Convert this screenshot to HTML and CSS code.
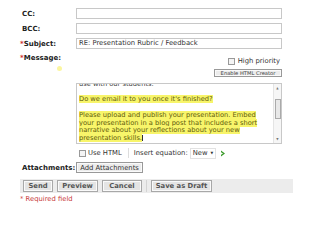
FILE: index.html
```html
<!DOCTYPE html>
<html>
<head>
<meta charset="utf-8">
<link rel="stylesheet" href="styles.css">
</head>
<body>
<div class="form">
  <div class="row first">
    <div class="label">CC:</div>
    <div class="input"></div>
  </div>
  <div class="row">
    <div class="label">BCC:</div>
    <div class="input"></div>
  </div>
  <div class="row">
    <div class="label"><span class="req">*</span>Subject:</div>
    <div class="input">RE: Presentation Rubric / Feedback</div>
  </div>
  <div class="row msg">
    <div class="label"><span class="req">*</span>Message:<span class="cursor"></span></div>
    <div class="content">
      <div class="priority"><span class="cb"></span>High priority</div>
      <div class="enable"><span class="btn small">Enable HTML Creator</span></div>
      <div class="textarea">
        <div class="text">
          <div class="inner">
            <p>use with our students.</p>
            <p>&nbsp;</p>
            <p><span class="hl">Do we email it to you once it's finished?</span></p>
            <p>&nbsp;</p>
            <p><span class="hl">Please upload and publish your presentation. Embed</span></p>
            <p><span class="hl">your presentation in a blog post that includes a short</span></p>
            <p><span class="hl">narrative about your reflections about your new</span></p>
            <p><span class="hl">presentation skills.</span><span class="caret"></span></p>
          </div>
        </div>
        <div class="scroll">
          <span class="arr">&#9650;</span>
          <span class="thumb"></span>
          <span class="arr">&#9660;</span>
        </div>
      </div>
      <div class="tools">
        <span class="cb"></span><span class="usehtml">Use HTML</span>
        <span class="sep"></span>
        <span>Insert equation:</span>
        <span class="select">New <span class="dd">&#9660;</span></span>
        <svg class="go" width="6" height="7" viewBox="0 0 6 7"><path d="M1 0.5 L5 3.5 L1 6.5 L1 4.8 L3 3.5 L1 2.2 Z" fill="#3a9a2a"/></svg>
      </div>
    </div>
  </div>
  <div class="row attach">
    <div class="label">Attachments:</div>
    <span class="btn">Add Attachments</span>
  </div>
  <div class="bar">
    <span class="btn big">Send</span>
    <span class="btn big">Preview</span>
    <span class="btn big">Cancel</span>
    <span class="vsep"></span>
    <span class="btn big">Save as Draft</span>
  </div>
  <div class="required">* Required field</div>
</div>
</body>
</html>
```
FILE: styles.css
```css
html, body {
  margin: 0;
  padding: 0;
  background: #fff;
}
body {
  width: 320px;
  height: 240px;
  overflow: hidden;
  font-family: "DejaVu Sans", Verdana, sans-serif;
  font-size: 7px;
  color: #333;
}
.form {
  padding-left: 20px;
  width: 262px;
}
.row {
  display: flex;
  align-items: center;
  margin-top: 4px;
}
.row.first {
  margin-top: 8px;
}
.label {
  width: 56px;
  flex: none;
  font-weight: bold;
  color: #222;
  padding-left: 2px;
  box-sizing: border-box;
  position: relative;
}
.req {
  color: #d03030;
  margin-left: -2px;
}
.input {
  flex: 1;
  height: 11px;
  border: 1px solid #c8c8c8;
  box-sizing: border-box;
  font-size: 6.8px;
  line-height: 9px;
  padding-left: 2px;
  color: #333;
}
.row.msg {
  align-items: flex-start;
  margin-top: 5px;
}
.row.msg .label {
  line-height: 9px;
}
.cursor {
  position: absolute;
  left: 37px;
  top: 12px;
  width: 5px;
  height: 5px;
  border-radius: 50%;
  background: #fbf6a0;
}
.content {
  flex: 1;
  padding-top: 3px;
}
.priority {
  display: flex;
  justify-content: flex-end;
  align-items: center;
  gap: 3px;
  height: 8px;
  font-size: 6.8px;
  color: #333;
  padding-right: 2px;
}
.cb {
  display: inline-block;
  width: 5px;
  height: 5px;
  border: 1px solid #999;
  background: #f4f4f4;
}
.enable {
  display: flex;
  justify-content: flex-end;
  margin-top: 4px;
}
.btn {
  display: inline-flex;
  align-items: center;
  justify-content: center;
  border: 1px solid #999;
  background: #ececec;
  box-sizing: border-box;
  color: #444;
  font-size: 6.6px;
  height: 11px;
  padding: 0 3px;
  box-shadow: inset 0 0 0 1px #fafafa;
}
.btn.small {
  font-size: 5.2px;
  height: 8px;
  width: 68px;
  padding: 0;
}
.textarea {
  margin-top: 6px;
  height: 61px;
  border: 1px solid #c8c8c8;
  box-sizing: border-box;
  display: flex;
  overflow: hidden;
}
.text {
  flex: 1;
  overflow: hidden;
  padding-left: 2px;
}
.inner {
  margin-top: -3px;
}
.text p {
  margin: 0;
  font-size: 6.7px;
  line-height: 7.7px;
  white-space: nowrap;
  color: #3a3a3a;
}
.hl {
  background: #f8f56a;
  color: #625c0c;
}
.caret {
  display: inline-block;
  width: 1px;
  height: 6px;
  background: #333;
  vertical-align: -1px;
}
.scroll {
  width: 8px;
  flex: none;
  border-left: 1px solid #e4e4e4;
  background: #f6f6f6;
  display: flex;
  flex-direction: column;
  align-items: center;
  justify-content: space-between;
  padding: 2px 0;
  box-sizing: border-box;
}
.arr {
  font-size: 3px;
  color: #777;
  line-height: 4px;
}
.thumb {
  width: 6px;
  height: 20px;
  border: 1px solid #aaa;
  background: #e8e8e8;
  box-sizing: border-box;
  margin: 0 0 10px;
}
.tools {
  display: flex;
  align-items: center;
  margin-top: 4px;
  height: 10px;
  font-size: 6.8px;
  color: #333;
  padding-left: 3px;
}
.usehtml {
  margin-left: 2px;
}
.sep {
  width: 1px;
  height: 10px;
  background: #ddd;
  margin: 0 5px 0 6px;
}
.select {
  margin-left: 2px;
  border: 1px solid #e2e2e2;
  padding: 0 2px;
  height: 9px;
  line-height: 9px;
  display: inline-flex;
  gap: 3px;
  align-items: center;
}
.dd {
  font-size: 3.5px;
  color: #333;
}
.go {
  margin-left: 4px;
}
.row.attach {
  margin-top: 4px;
}
.attach .btn {
  height: 11px;
  width: 67px;
  font-size: 6.8px;
  color: #333;
}
.bar {
  margin-top: 6px;
  background: #ececec;
  height: 14px;
  width: 273px;
  display: flex;
  align-items: center;
  gap: 4px;
  padding-left: 3px;
  box-sizing: border-box;
}
.btn.big {
  height: 12px;
  font-weight: bold;
  color: #555;
  font-size: 6.8px;
  background: #e4e4e4;
  border-color: #a8a8a8;
}
.btn.big:nth-child(1) { width: 30px; }
.btn.big:nth-child(2) { width: 41px; }
.btn.big:nth-child(3) { width: 40px; }
.btn.big:nth-child(5) { width: 61px; }
.vsep {
  width: 1px;
  height: 12px;
  background: #d4d4d4;
}
.required {
  color: #c83a3a;
  font-size: 6.8px;
  margin-top: 2px;
}
```
